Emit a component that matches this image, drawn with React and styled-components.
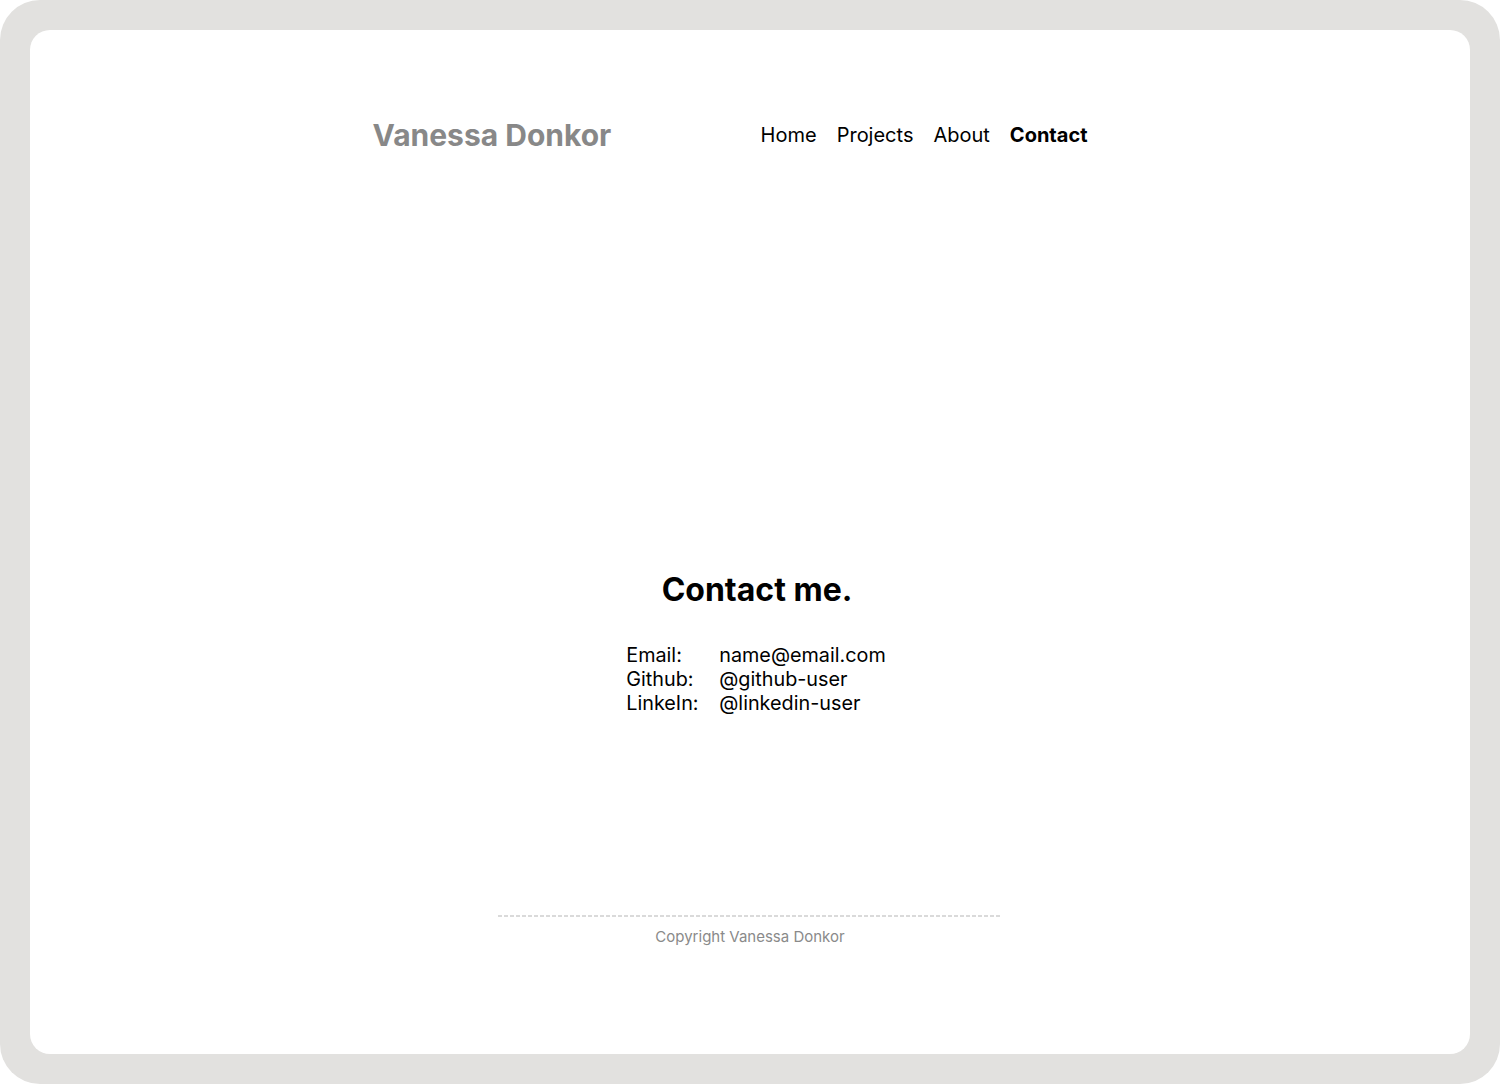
import React from "react";
import styled, { createGlobalStyle } from "styled-components";

const Global = createGlobalStyle`
  html, body { margin: 0; padding: 0; }
  body { background: #ffffff; font-family: Inter, "Noto Sans", sans-serif; }
`;

const Frame = styled.div`
  width: 1500px;
  height: 1084px;
  box-sizing: border-box;
  background: #e2e1df;
  border-radius: 40px;
  padding: 30px;
`;

const Page = styled.div`
  height: 100%;
  background: #ffffff;
  border-radius: 20px;
  display: flex;
  flex-direction: column;
  align-items: center;
`;

const Header = styled.header`
  width: 715px;
  margin-top: 87px;
  margin-left: -40px;
  display: flex;
  justify-content: space-between;
  align-items: center;
`;

const Logo = styled.div`
  font-size: 30px;
  font-weight: 700;
  color: #888888;
`;

const Nav = styled.nav`
  display: flex;
  gap: 20px;
`;

const NavLink = styled.a`
  font-size: 20px;
  color: #000;
  font-weight: ${(p) => (p.$active ? 700 : 400)};
  text-decoration: none;
`;

const Main = styled.main`
  margin-top: 417px;
  display: flex;
  flex-direction: column;
  align-items: center;
`;

const Heading = styled.h1`
  margin: 0;
  font-size: 32px;
  font-weight: 700;
  color: #000;
  margin-left: 14px;
`;

const InfoGrid = styled.div`
  margin-top: 34px;
  display: grid;
  grid-template-columns: 93px auto;
  font-size: 19.8px;
  line-height: 24px;
  color: #000;
  margin-left: 12px;
`;

const Footer = styled.footer`
  margin-top: 200px;
  width: 504px;
  display: flex;
  flex-direction: column;
  align-items: center;
`;

const Divider = styled.div`
  width: 100%;
  height: 2px;
  background: repeating-linear-gradient(
    to right,
    #dadada 0,
    #dadada 4px,
    transparent 4px,
    transparent 6px
  );
`;

const Copy = styled.div`
  margin-top: 10px;
  font-size: 15px;
  color: #8a8a8a;
`;

export default function App() {
  const rows = [
    ["Email:", "name@email.com"],
    ["Github:", "@github-user"],
    ["LinkeIn:", "@linkedin-user"],
  ];
  return (
    <>
      <Global />
      <Frame>
        <Page>
          <Header>
            <Logo>Vanessa Donkor</Logo>
            <Nav>
              <NavLink>Home</NavLink>
              <NavLink>Projects</NavLink>
              <NavLink>About</NavLink>
              <NavLink $active>Contact</NavLink>
            </Nav>
          </Header>
          <Main>
            <Heading>Contact me.</Heading>
            <InfoGrid>
              {rows.map(([k, v]) => (
                <React.Fragment key={k}>
                  <span>{k}</span>
                  <span>{v}</span>
                </React.Fragment>
              ))}
            </InfoGrid>
          </Main>
          <Footer>
            <Divider />
            <Copy>Copyright Vanessa Donkor</Copy>
          </Footer>
        </Page>
      </Frame>
    </>
  );
}
